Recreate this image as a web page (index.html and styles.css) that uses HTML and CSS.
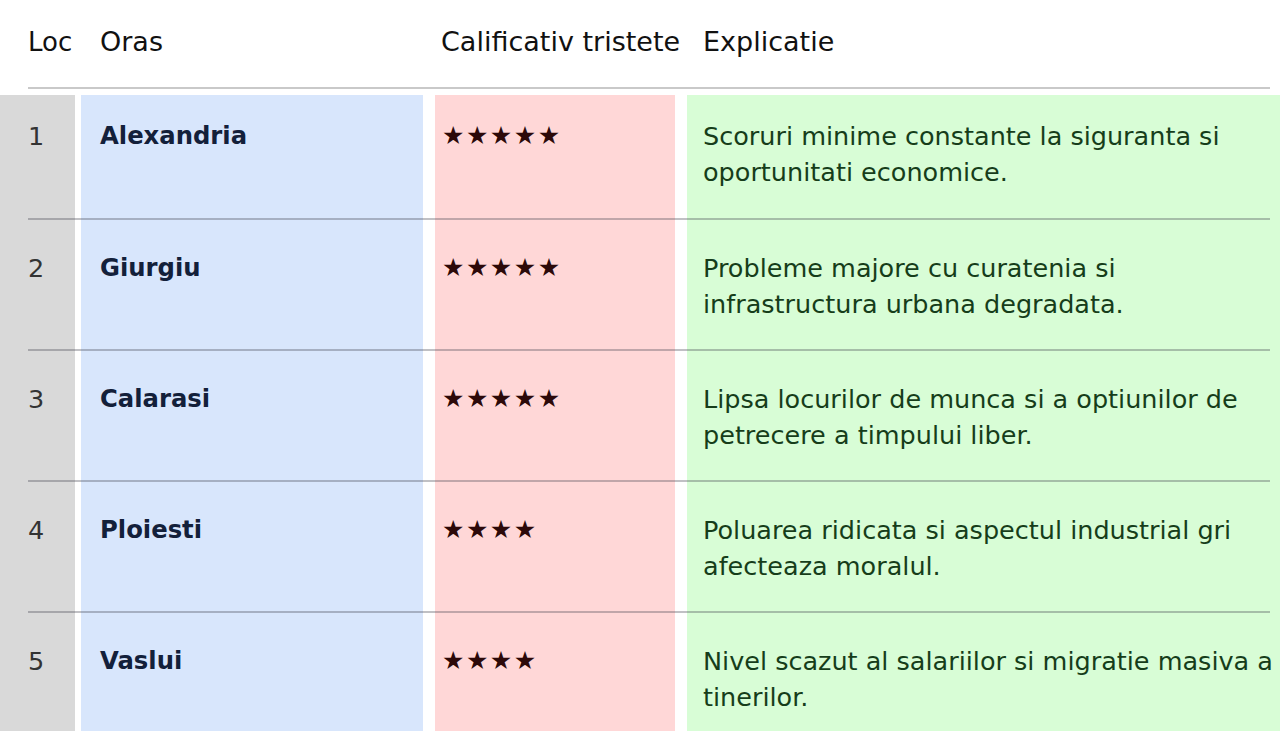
FILE: index.html
```html
<!DOCTYPE html>
<html lang="ro">
<head>
<meta charset="utf-8">
<title>Clasament orase</title>
<link rel="stylesheet" href="styles.css">
</head>
<body>
<div class="table">
  <div class="head">
    <div class="cell c-loc">Loc</div>
    <div class="cell c-city">Oras</div>
    <div class="cell c-rate">Calificativ tristete</div>
    <div class="cell c-exp">Explicatie</div>
  </div>
  <div class="row">
    <div class="cell c-loc">1</div>
    <div class="cell c-city">Alexandria</div>
    <div class="cell c-rate">★★★★★</div>
    <div class="cell c-exp">Scoruri minime constante la siguranta si oportunitati economice.</div>
  </div>
  <div class="row">
    <div class="cell c-loc">2</div>
    <div class="cell c-city">Giurgiu</div>
    <div class="cell c-rate">★★★★★</div>
    <div class="cell c-exp">Probleme majore cu curatenia si infrastructura urbana degradata.</div>
  </div>
  <div class="row">
    <div class="cell c-loc">3</div>
    <div class="cell c-city">Calarasi</div>
    <div class="cell c-rate">★★★★★</div>
    <div class="cell c-exp">Lipsa locurilor de munca si a optiunilor de petrecere a timpului liber.</div>
  </div>
  <div class="row">
    <div class="cell c-loc">4</div>
    <div class="cell c-city">Ploiesti</div>
    <div class="cell c-rate">★★★★</div>
    <div class="cell c-exp">Poluarea ridicata si aspectul industrial gri afecteaza moralul.</div>
  </div>
  <div class="row">
    <div class="cell c-loc">5</div>
    <div class="cell c-city">Vaslui</div>
    <div class="cell c-rate">★★★★</div>
    <div class="cell c-exp">Nivel scazut al salariilor si migratie masiva a tinerilor.</div>
  </div>
</div>
</body>
</html>
```
FILE: styles.css
```css
html, body {
  margin: 0;
  padding: 0;
  overflow: hidden;
  background: #ffffff;
}

body {
  font-family: "DejaVu Sans", "Noto Sans", "Liberation Sans", sans-serif;
  font-size: 25.5px;
  line-height: 36px;
  color: #222;
}

.table {
  display: flex;
  flex-direction: column;
  width: 1280px;
}

.head,
.row {
  display: flex;
  position: relative;
}

.head {
  height: 95px;
  color: #111;
}

.head::after {
  content: "";
  position: absolute;
  left: 28px;
  right: 10px;
  top: 87px;
  height: 2px;
  background: #c9c9c9;
}

.row {
  height: 131px;
}

.head + .row {
  height: 124px;
}

.row::before {
  content: "";
  position: absolute;
  left: 28px;
  right: 10px;
  top: -1px;
  height: 2px;
  background: rgba(60, 60, 70, 0.32);
}

.head + .row::before {
  display: none;
}

.cell {
  padding-top: 31px;
  box-sizing: border-box;
}

.head .cell {
  padding-top: 24px;
}

.head + .row .cell {
  padding-top: 23px;
}

.c-loc {
  width: 75px;
  padding-left: 28px;
  background: #d9d9d9;
  color: #333;
}

.c-city {
  width: 342px;
  margin-left: 6px;
  padding-left: 19px;
  background: #d8e6fc;
  font-weight: 700;
  font-size: 24.3px;
  color: #13203a;
}

.c-rate {
  width: 240px;
  margin-left: 12px;
  padding-left: 7px;
  background: #ffd7d7;
  color: #2c0909;
  font-size: 25px;
  letter-spacing: 1.5px;
}

.c-exp {
  flex: 1;
  margin-left: 12px;
  padding-left: 16px;
  padding-right: 2px;
  background: #d8fdd6;
  color: #163d1a;
}

.head .cell {
  background: transparent;
  color: #111;
  font-weight: 400;
  font-size: 27px;
  letter-spacing: 0;
  white-space: nowrap;
}

.head .c-loc {
  font-size: 26px;
}

.head .c-rate {
  padding-left: 6px;
}
```
